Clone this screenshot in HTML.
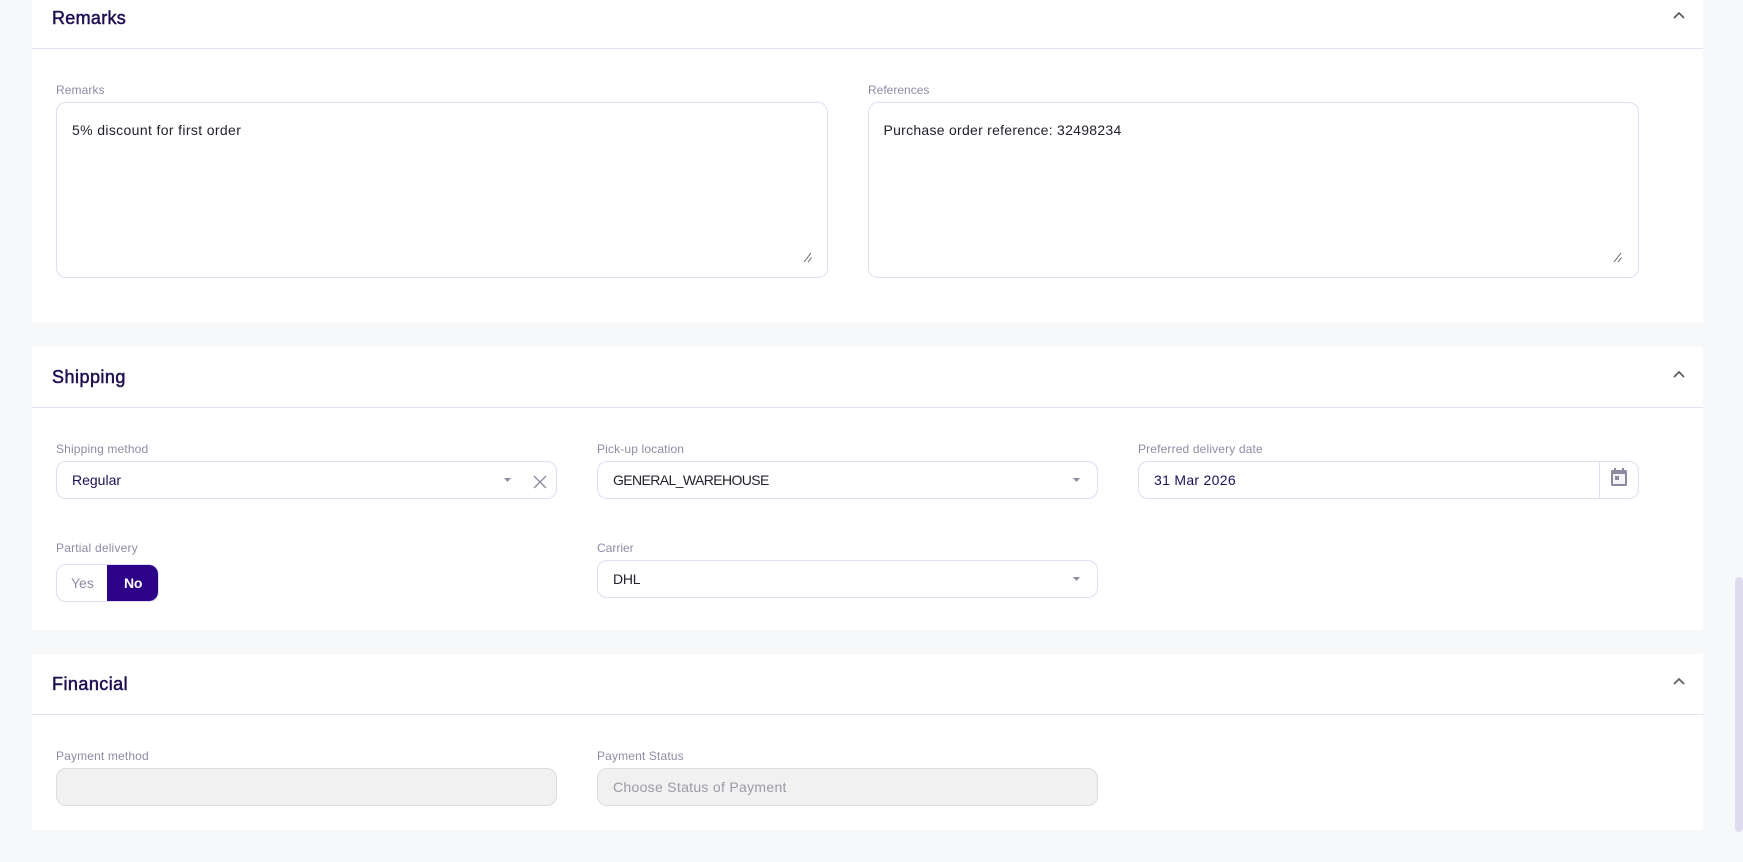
<!DOCTYPE html>
<html lang="en">
<head>
<meta charset="utf-8">
<title>Order form</title>
<style>
html,body{margin:0;padding:0;width:1743px;height:862px;overflow:hidden;background:#f7f8fa;}
body{position:relative;font-family:"Liberation Sans",sans-serif;font-size:14px;color:#22222c;}
.a{position:absolute;}
.card{position:absolute;left:32px;width:1671px;background:#fff;}
.hr{position:absolute;left:32px;width:1671px;height:1px;background:#e3e0f1;}
.t{position:absolute;left:52px;font-size:18px;line-height:24px;color:#1f0f50;white-space:nowrap;-webkit-text-stroke:.5px #1f0f50;}
.l{position:absolute;font-size:12px;line-height:16px;color:#8f8ba5;white-space:nowrap;letter-spacing:.15px;}
.box{position:absolute;box-sizing:border-box;border:1px solid #e0ddf0;border-radius:10px;background:#fff;height:38px;}
.v{position:absolute;line-height:20px;white-space:nowrap;font-size:14px;letter-spacing:.3px;}
.dis{background:#f1f1f1;border-color:#dcdcdf;}
svg{position:absolute;display:block;overflow:visible;}
</style>
</head>
<body>
<div class="card" style="top:0;height:323px;"></div>
<div class="card" style="top:347px;height:283px;"></div>
<div class="card" style="top:654px;height:176px;"></div>
<div class="hr" style="top:48px;"></div>
<div class="hr" style="top:407px;"></div>
<div class="hr" style="top:714px;"></div>

<div class="t" style="top:6px;letter-spacing:.3px;">Remarks</div>
<div class="t" style="top:365px;letter-spacing:.48px;">Shipping</div>
<div class="t" style="top:672px;letter-spacing:.45px;">Financial</div>

<!-- Remarks -->
<div class="l" style="left:56px;top:82px;letter-spacing:.1px;">Remarks</div>
<div class="box" style="left:56px;top:102px;width:772px;height:176px;"></div>
<div class="v" style="left:72px;top:120px;letter-spacing:.36px;">5% discount for first order</div>
<div class="l" style="left:868px;top:82px;letter-spacing:0;">References</div>
<div class="box" style="left:868px;top:102px;width:771px;height:176px;"></div>
<div class="v" style="left:883.500px;top:120px;letter-spacing:.27px;">Purchase order reference: 32498234</div>

<!-- Shipping -->
<div class="l" style="left:56px;top:441px;">Shipping method</div>
<div class="box" style="left:56px;top:461px;width:501px;"></div>
<div class="v" style="left:72px;top:470px;color:#200f56;letter-spacing:0;">Regular</div>

<div class="l" style="left:597px;top:441px;">Pick-up location</div>
<div class="box" style="left:597px;top:461px;width:501px;"></div>
<div class="v" style="left:613px;top:470px;letter-spacing:-.6px;">GENERAL_WAREHOUSE</div>

<div class="l" style="left:1138px;top:441px;">Preferred delivery date</div>
<div class="box" style="left:1138px;top:461px;width:501px;"></div>
<div class="a" style="left:1599px;top:462px;width:1px;height:36px;background:#e0ddf0;"></div>
<div class="v" style="left:1154px;top:470px;color:#200f56;">31 Mar 2026</div>
<svg style="left:1611px;top:468px;" width="16" height="18" viewBox="0 0 16 18">
  <path d="M3 0h2v2h6V0h2v2h1.500A1.500 1.500 0 0 1 16 3.500v13a1.500 1.500 0 0 1-1.500 1.500h-13A1.500 1.500 0 0 1 0 16.500v-13A1.500 1.500 0 0 1 1.500 2H3z" fill="#8d8a9f"/>
  <rect x="2" y="6" width="12" height="10" fill="#f4f4f7"/>
  <rect x="4" y="8" width="4" height="4" fill="#8d8a9f"/>
</svg>

<div class="l" style="left:56px;top:540px;letter-spacing:.2px;">Partial delivery</div>
<div class="box" style="left:56px;top:564px;width:103px;overflow:hidden;">
  <div class="a" style="left:50px;top:-1px;width:52px;height:38px;background:#2e0288;"></div>
  <div class="a" style="left:14px;top:8px;line-height:20px;color:#8f8ba5;">Yes</div>
  <div class="a" style="left:67px;top:8px;line-height:20px;color:#fff;font-weight:700;letter-spacing:-.2px;">No</div>
</div>

<div class="l" style="left:597px;top:540px;letter-spacing:0;">Carrier</div>
<div class="box" style="left:597px;top:560px;width:501px;"></div>
<div class="v" style="left:613px;top:569px;letter-spacing:-.25px;">DHL</div>

<!-- Financial -->
<div class="l" style="left:56px;top:748px;">Payment method</div>
<div class="box dis" style="left:56px;top:768px;width:501px;"></div>
<div class="l" style="left:597px;top:748px;">Payment Status</div>
<div class="box dis" style="left:597px;top:768px;width:501px;"></div>
<div class="v" style="left:613px;top:777px;color:#9a9aa6;">Choose Status of Payment</div>

<!-- Icons -->
<svg style="left:0;top:0;" width="1743" height="862">
  <path d="M1674 18l5-5 5 5" fill="none" stroke="#5f5f66" stroke-width="1.800"/>
  <path d="M1674 377l5-5 5 5" fill="none" stroke="#5f5f66" stroke-width="1.800"/>
  <path d="M1674 684l5-5 5 5" fill="none" stroke="#5f5f66" stroke-width="1.800"/>
  <path d="M804 262l7-9M808 262l3.500-4.500" fill="none" stroke="#666" stroke-width="1"/>
  <path d="M1614 262l7-9M1618 262l3.500-4.500" fill="none" stroke="#666" stroke-width="1"/>
  <path d="M504 478h7l-3.500 4z" fill="#8f8ba5"/>
  <path d="M534 476l12 12M546 476l-12 12" fill="none" stroke="#8f8ba5" stroke-width="1.300"/>
  <path d="M1073 478h7l-3.500 4z" fill="#8f8ba5"/>
  <path d="M1073 577h7l-3.500 4z" fill="#8f8ba5"/>
</svg>

<!-- Scrollbar -->
<div class="a" style="left:1735px;top:577px;width:8px;height:255px;border-radius:4px;background:#e0dcf0;"></div>
</body>
</html>
